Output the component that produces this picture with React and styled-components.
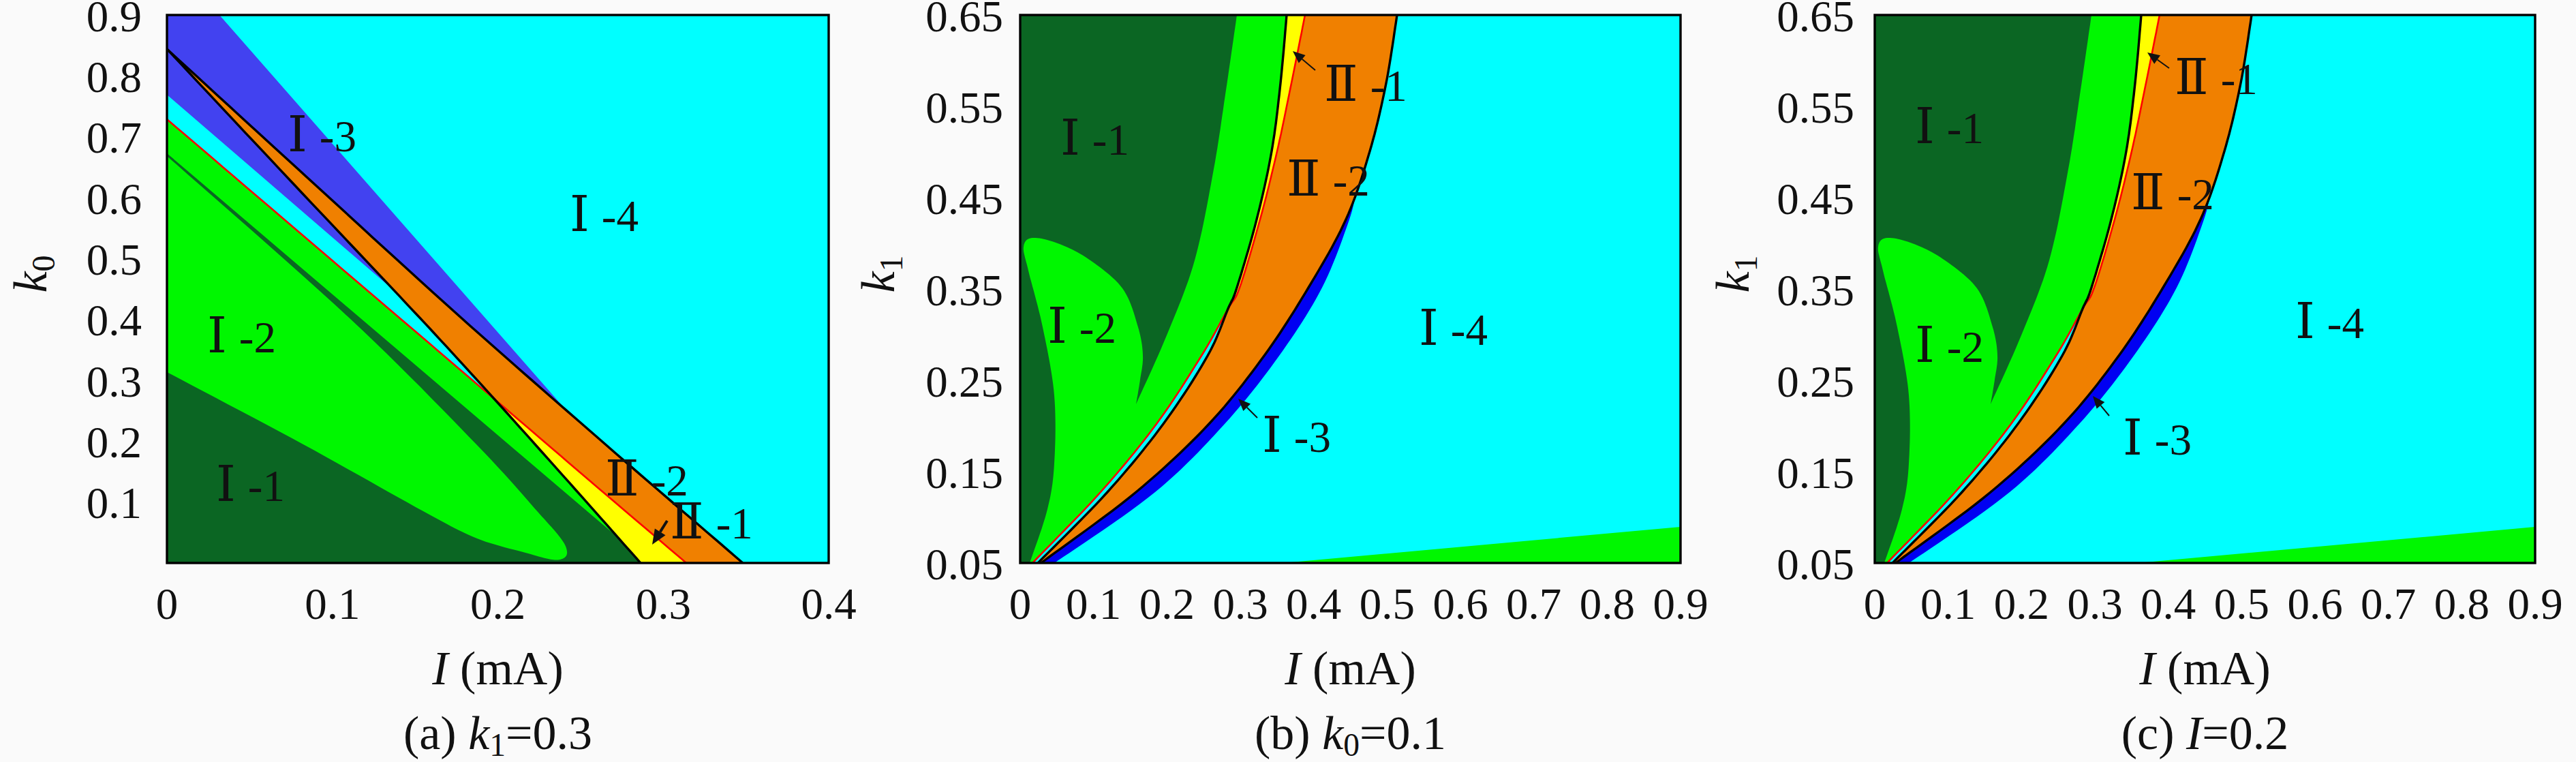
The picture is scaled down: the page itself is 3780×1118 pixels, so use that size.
import React from 'react';
import styled, { createGlobalStyle } from 'styled-components';

const GlobalStyle = createGlobalStyle`
  html, body {
    margin: 0;
    padding: 0;
    background: #fafafa;
  }
`;

const palette = {
  dark: '#0b6623',
  green: '#00f700',
  cyan: '#00ffff',
  blueSoft: '#4242f0',
  blue: '#0000f2',
  orange: '#f08000',
  yellow: '#ffff00',
  red: '#ff0000',
  ink: '#111111',
};

const Page = styled.div`
  display: flex;
  width: 3780px;
  height: 1118px;
  overflow: hidden;
  background: #fafafa;
  color: ${palette.ink};
  font-family: "Liberation Serif", "DejaVu Serif", serif;
`;

const Figure = styled.figure`
  margin: 0;
  width: 1260px;
  display: flex;
  flex-direction: column;
`;

const Chart = styled.svg`
  display: block;
  width: 1260px;
  height: 936px;
  overflow: visible;
  font-family: "Liberation Serif", "DejaVu Serif", serif;
`;

const AxisTitle = styled.div`
  margin-left: ${(p) => p.$left}px;
  width: ${(p) => p.$w}px;
  height: 90px;
  text-align: center;
  font-size: 70px;
  line-height: 90px;
  white-space: nowrap;
`;

const Caption = styled.figcaption`
  margin-top: 5px;
  margin-left: ${(p) => p.$left}px;
  width: ${(p) => p.$w}px;
  text-align: center;
  font-size: 70px;
  line-height: 90px;
  white-space: nowrap;
`;

const Var = styled.i`
  font-style: italic;
`;

const Sub = styled.sub`
  font-size: 0.68em;
  line-height: 0;
  vertical-align: -0.22em;
`;

// catmull-rom through the nodes, node i sits at index i*N
const N = 12;
const sample = (pts) => {
  const out = [];
  for (let i = 0; i < pts.length - 1; i++) {
    const p0 = pts[i - 1] || pts[i];
    const p1 = pts[i];
    const p2 = pts[i + 1];
    const p3 = pts[i + 2] || pts[i + 1];
    for (let k = 0; k < N; k++) {
      const t = k / N;
      const t2 = t * t;
      const t3 = t2 * t;
      const f = (a, b, c, d) =>
        0.5 * (2 * b + (-a + c) * t + (2 * a - 5 * b + 4 * c - d) * t2 + (-a + 3 * b - 3 * c + d) * t3);
      out.push([f(p0[0], p1[0], p2[0], p3[0]), f(p0[1], p1[1], p2[1], p3[1])]);
    }
  }
  out.push(pts[pts.length - 1]);
  return out;
};

const line = (pts) => 'M' + pts.map((p) => `${p[0].toFixed(1)} ${p[1].toFixed(1)}`).join(' L');
const poly = (...parts) => line(parts.flat()) + ' Z';
const rev = (pts) => pts.slice().reverse();

/* ---------- panel (a) geometry, frame 971 x 804 ---------- */
const aL1 = sample([[0, 50], [183, 245], [367, 440], [480, 563], [600, 697], [695, 804]]);
const aR = sample([[0, 153], [240, 358], [480, 563], [620, 683], [762, 804]]);
const aL2 = sample([[0, 50], [213, 245], [427, 440], [640, 627], [845, 804]]);
const aTongue = sample([
  [0, 524], [200, 630], [376, 728], [455, 768], [530, 790], [565, 799], [582, 797],
  [587, 787], [578, 768], [545, 730], [455, 631], [267, 444], [0, 207],
]);

const shapesA = {
  green: poly(aR.slice(0, 2 * N + 1), aL1.slice(3 * N), [[0, 804]]),
  dark: poly([[0, 203], [660, 765], [695, 804], [0, 804], [0, 524]], aTongue),
  blue: poly([[0, 0], [77, 0], [578, 571]], rev(aL2.filter((p) => p[0] < 578)), [[0, 50]]),
  wedge: poly([[0, 50], [0, 117], [333, 404], [183, 245]]),
  orange: poly(aL2, [[695, 804]], rev(aL1)),
  yellow: poly(aR.slice(2 * N), rev(aL1.slice(3 * N))),
  black: [line(aL1), line(aL2)],
  red: line(aR),
};

/* ---------- panels (b) and (c) geometry, frame 969 x 804 ---------- */
const bL1 = sample([
  [391, 0], [382, 100], [369, 200], [347, 300], [318, 400], [305, 431],
  [275, 500], [210, 600], [128, 700], [30, 800], [26, 804],
]);
const bR = sample([
  [418, 0], [398, 100], [377, 200], [352, 300], [322, 400], [305, 431],
  [266, 500], [200, 600], [118, 700], [22, 800], [20, 804],
]);
const bL2 = sample([
  [553, 0], [537, 100], [513, 200], [478, 300], [423, 400], [358, 500],
  [277, 600], [170, 700], [36, 800], [32, 804],
]);
const bB = sample([[493, 256], [483, 300], [443, 400], [380, 500], [300, 600], [198, 700], [56, 800], [44, 804]]);
const bBand = sample([[318, 0], [302, 110], [284, 226], [256, 360], [215, 470], [170, 571]]);
const bLobe = sample([
  [170, 571], [176, 535], [180, 500], [173, 458], [150, 401], [100, 358], [55, 335],
  [18, 327], [5, 340], [12, 375], [33, 458], [50, 558], [50, 658], [40, 725], [14, 804],
]);

const shapesB = {
  green: poly([[0, 0]], bL1, [[0, 804]]),
  dark: poly([[0, 0]], bBand, bLobe.slice(1), [[0, 804]]),
  floor: poly([[386, 804], [969, 751], [969, 804]]),
  strip: poly(bR.slice(5 * N), rev(bL1.slice(5 * N))),
  orange: poly(bL2, rev(bL1)),
  yellow: poly(bL1.slice(0, 5 * N + 1), rev(bR.slice(0, 5 * N + 1))),
  blue: poly(bL2.filter((p) => p[1] >= 256), rev(bB)),
  black: [line(bL1), line(bL2)],
  red: line(bR),
};

const RegionLabel = ({ x, y, num, n }) => (
  <text x={x} y={y} fontSize="65" fill={palette.ink}>
    <tspan fontSize="73">{num}</tspan>
    <tspan dx="18">-{n}</tspan>
  </text>
);

const Arrow = ({ x1, y1, x2, y2, w = 2, head = 18 }) => {
  const a = Math.atan2(y2 - y1, x2 - x1);
  const hx = x2 - head * Math.cos(a);
  const hy = y2 - head * Math.sin(a);
  const s = head * 0.42;
  const px = -Math.sin(a) * s;
  const py = Math.cos(a) * s;
  return (
    <g>
      <line x1={x1} y1={y1} x2={hx} y2={hy} stroke={palette.ink} strokeWidth={w} />
      <polygon
        points={`${x2},${y2} ${hx + px},${hy + py} ${hx - px},${hy - py}`}
        fill={palette.ink}
      />
    </g>
  );
};

const Regions = ({ kind, id, w }) => {
  const s = kind === 'a' ? shapesA : shapesB;
  return (
    <g clipPath={`url(#${id})`}>
      <rect width={w} height="804" fill={palette.cyan} />
      <path d={s.green} fill={palette.green} />
      <path d={s.dark} fill={palette.dark} />
      {kind === 'a' ? (
        <>
          <path d={s.blue} fill={palette.blueSoft} />
          <path d={s.wedge} fill={palette.blueSoft} />
        </>
      ) : (
        <>
          <path d={s.floor} fill={palette.green} />
          <path d={s.strip} fill={palette.cyan} />
        </>
      )}
      <path d={s.orange} fill={palette.orange} />
      <path d={s.yellow} fill={palette.yellow} />
      {kind !== 'a' && <path d={s.blue} fill={palette.blue} />}
      <path d={s.red} fill="none" stroke={palette.red} strokeWidth="2.6" />
      {s.black.map((d, i) => (
        <path key={i} d={d} fill="none" stroke="#000" strokeWidth="3.4" />
      ))}
    </g>
  );
};

const fmt = (v, digits) => (v === 0 ? '0' : v.toFixed(digits));

const Plot = ({ cfg }) => {
  const { id, kind, left, w, xMax, xTicks, yMin, yMax, yTicks, yDigits, tickGap, yLabel, yLabelX, labels, arrows } = cfg;
  const px = (v) => (v / xMax) * w;
  const py = (v) => 804 * (1 - (v - yMin) / (yMax - yMin));
  return (
    <Chart viewBox="0 0 1260 936">
      <defs>
        <clipPath id={id}>
          <rect width={w} height="804" />
        </clipPath>
      </defs>
      <g transform={`translate(${left},22)`}>
        <Regions kind={kind} id={id} w={w} />
        {labels.map((l, i) => (
          <RegionLabel key={i} {...l} />
        ))}
        {arrows.map((a, i) => (
          <Arrow key={i} {...a} />
        ))}
        <rect x="0" y="0" width={w} height="804" fill="none" stroke="#000" strokeWidth="3.4" />
        {yTicks.map((v) => (
          <text key={v} x={-tickGap} y={py(v) + 23.5} fontSize="65" textAnchor="end" fill={palette.ink}>
            {fmt(v, yDigits)}
          </text>
        ))}
        {xTicks.map((v) => (
          <text key={v} x={px(v)} y="886" fontSize="65" textAnchor="middle" fill={palette.ink}>
            {fmt(v, 1)}
          </text>
        ))}
      </g>
      <text
        transform={`translate(${yLabelX},402) rotate(-90)`}
        textAnchor="middle"
        fontSize="70"
        fill={palette.ink}
      >
        <tspan fontStyle="italic">k</tspan>
        <tspan fontSize="48" dy="12">{yLabel}</tspan>
      </text>
    </Chart>
  );
};

const range = (a, b, step) => {
  const out = [];
  for (let v = a; v <= b + 1e-9; v += step) out.push(Math.round(v * 100) / 100);
  return out;
};

const panels = [
  {
    id: 'clipA',
    kind: 'a',
    left: 245,
    w: 971,
    xMax: 0.4,
    xTicks: range(0, 0.4, 0.1),
    yMin: 0,
    yMax: 0.9,
    yTicks: range(0.1, 0.9, 0.1),
    yDigits: 1,
    tickGap: 37,
    yLabel: '0',
    yLabelX: 68,
    labels: [
      { x: 177, y: 200, num: 'Ⅰ', n: 3 },
      { x: 591, y: 317, num: 'Ⅰ', n: 4 },
      { x: 59, y: 495, num: 'Ⅰ', n: 2 },
      { x: 72, y: 713, num: 'Ⅰ', n: 1 },
      { x: 643, y: 705, num: 'Ⅱ', n: 2 },
      { x: 738, y: 768, num: 'Ⅱ', n: 1 },
    ],
    arrows: [{ x1: 734, y1: 742, x2: 712, y2: 777, w: 4, head: 22 }],
    title: (
      <>
        (a) <Var>k</Var>
        <Sub>1</Sub>=0.3
      </>
    ),
  },
  {
    id: 'clipB',
    kind: 'b',
    left: 237,
    w: 969,
    xMax: 0.9,
    xTicks: range(0, 0.9, 0.1),
    yMin: 0.05,
    yMax: 0.65,
    yTicks: range(0.05, 0.65, 0.1),
    yDigits: 2,
    tickGap: 25,
    yLabel: '1',
    yLabelX: 52,
    labels: [
      { x: 59, y: 205, num: 'Ⅰ', n: 1 },
      { x: 40, y: 481, num: 'Ⅰ', n: 2 },
      { x: 446, y: 126, num: 'Ⅱ', n: 1 },
      { x: 391, y: 265, num: 'Ⅱ', n: 2 },
      { x: 355, y: 641, num: 'Ⅰ', n: 3 },
      { x: 585, y: 484, num: 'Ⅰ', n: 4 },
    ],
    arrows: [
      { x1: 433, y1: 81, x2: 400, y2: 53 },
      { x1: 348, y1: 591, x2: 320, y2: 563 },
    ],
    title: (
      <>
        (b) <Var>k</Var>
        <Sub>0</Sub>=0.1
      </>
    ),
  },
  {
    id: 'clipC',
    kind: 'c',
    left: 231,
    w: 969,
    xMax: 0.9,
    xTicks: range(0, 0.9, 0.1),
    yMin: 0.05,
    yMax: 0.65,
    yTicks: range(0.05, 0.65, 0.1),
    yDigits: 2,
    tickGap: 30,
    yLabel: '1',
    yLabelX: 46,
    labels: [
      { x: 59, y: 188, num: 'Ⅰ', n: 1 },
      { x: 59, y: 509, num: 'Ⅰ', n: 2 },
      { x: 440, y: 116, num: 'Ⅱ', n: 1 },
      { x: 376, y: 285, num: 'Ⅱ', n: 2 },
      { x: 364, y: 645, num: 'Ⅰ', n: 3 },
      { x: 617, y: 474, num: 'Ⅰ', n: 4 },
    ],
    arrows: [
      { x1: 432, y1: 78, x2: 400, y2: 55 },
      { x1: 344, y1: 588, x2: 320, y2: 559 },
    ],
    title: (
      <>
        (c) <Var>I</Var>=0.2
      </>
    ),
  },
];

const App = () => {
  return (
    <>
      <GlobalStyle />
      <Page>
        {panels.map((cfg) => (
          <Figure key={cfg.id}>
            <Plot cfg={cfg} />
            <AxisTitle $left={cfg.left} $w={cfg.w}>
              <Var>I</Var> (mA)
            </AxisTitle>
            <Caption $left={cfg.left} $w={cfg.w}>
              {cfg.title}
            </Caption>
          </Figure>
        ))}
      </Page>
    </>
  );
};

export default App;
